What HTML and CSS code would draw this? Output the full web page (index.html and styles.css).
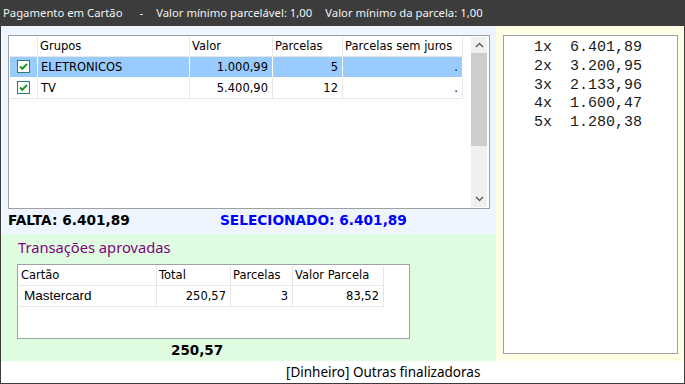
FILE: index.html
```html
<!DOCTYPE html>
<html lang="pt-BR">
<head>
    <meta charset="UTF-8">
    <meta name="viewport" content="width=device-width, initial-scale=1.0">
    <title>Pagamento em Cartão</title>
    <link rel="stylesheet" href="styles.css">
</head>
<body>
    <div class="window">
        <div class="titlebar">
            <span>Pagamento em Cartão</span>
            <span class="title-sep">-</span>
            <span class="title-info">Valor mínimo parcelável: 1,00</span>
            <span class="title-info">Valor mínimo da parcela: 1,00</span>
        </div>

        <div class="main">
            <div class="left-col">
                <div class="grupos-area">
                    <div class="grid grupos-grid">
                        <div class="grid-body">
                            <div class="row head">
                                <div class="cell"></div>
                                <div class="cell">Grupos</div>
                                <div class="cell">Valor</div>
                                <div class="cell">Parcelas</div>
                                <div class="cell">Parcelas sem juros</div>
                            </div>
                            <div class="row selected">
                                <div class="cell check-cell">
                                    <svg class="check" width="13" height="13" viewBox="0 0 13 13">
                                        <rect x="0.5" y="0.5" width="12" height="12" fill="#fff" stroke="#22806f"/>
                                        <polyline points="3,6.5 5.3,8.8 10,4" fill="none" stroke="#1c9a1c" stroke-width="2"/>
                                    </svg>
                                </div>
                                <div class="cell">ELETRONICOS</div>
                                <div class="cell num">1.000,99</div>
                                <div class="cell num">5</div>
                                <div class="cell num">.</div>
                            </div>
                            <div class="row">
                                <div class="cell check-cell">
                                    <svg class="check" width="13" height="13" viewBox="0 0 13 13">
                                        <rect x="0.5" y="0.5" width="12" height="12" fill="#fff" stroke="#22806f"/>
                                        <polyline points="3,6.5 5.3,8.8 10,4" fill="none" stroke="#1c9a1c" stroke-width="2"/>
                                    </svg>
                                </div>
                                <div class="cell">TV</div>
                                <div class="cell num">5.400,90</div>
                                <div class="cell num">12</div>
                                <div class="cell num">.</div>
                            </div>
                        </div>
                        <div class="scrollbar">
                            <div class="scroll-btn">
                                <svg width="9" height="6" viewBox="0 0 9 6"><polyline points="1,5 4.5,1.5 8,5" fill="none" stroke="#606060" stroke-width="1.5"/></svg>
                            </div>
                            <div class="scroll-thumb"></div>
                            <div class="scroll-track"></div>
                            <div class="scroll-btn">
                                <svg width="9" height="6" viewBox="0 0 9 6"><polyline points="1,1 4.5,4.5 8,1" fill="none" stroke="#606060" stroke-width="1.5"/></svg>
                            </div>
                        </div>
                    </div>
                    <div class="totals">
                        <span class="falta">FALTA: 6.401,89</span>
                        <span class="selecionado">SELECIONADO: 6.401,89</span>
                    </div>
                </div>

                <div class="transacoes">
                    <div class="section-title">Transações aprovadas</div>
                    <div class="grid trans-grid">
                        <div class="row head">
                            <div class="cell">Cartão</div>
                            <div class="cell">Total</div>
                            <div class="cell">Parcelas</div>
                            <div class="cell">Valor Parcela</div>
                        </div>
                        <div class="row">
                            <div class="cell card-name">Mastercard</div>
                            <div class="cell num">250,57</div>
                            <div class="cell num">3</div>
                            <div class="cell num">83,52</div>
                        </div>
                    </div>
                    <div class="trans-total">250,57</div>
                </div>
            </div>

            <div class="parcelas-panel">
                <div class="parcelas-box">
                    <div class="parcela">1x  6.401,89</div>
                    <div class="parcela">2x  3.200,95</div>
                    <div class="parcela">3x  2.133,96</div>
                    <div class="parcela">4x  1.600,47</div>
                    <div class="parcela">5x  1.280,38</div>
                </div>
            </div>
        </div>

        <div class="footer">[Dinheiro] Outras finalizadoras</div>
    </div>
</body>
</html>
```

FILE: styles.css
```css
:root {
    --frame-color: #3c3c3c;
    --grid-border: #a0a0a0;
    --cell-line: #e6e6e6;
    --selected-color: #99ccfd;
    --blue-bg: #eef5fe;
    --green-bg: #e0fce0;
    --yellow-bg: #ffffe6;
}

* {
    box-sizing: border-box;
}

body {
    margin: 0;
    padding: 0;
    background-color: #fff;
}

.window {
    width: 685px;
    height: 384px;
    border: 1px solid var(--frame-color);
    border-top: none;
    display: flex;
    flex-direction: column;
    overflow: hidden;
}

.titlebar {
    height: 26px;
    line-height: 26px;
    background-color: var(--frame-color);
    color: #f2f2f2;
    font-family: "Noto Sans", sans-serif;
    font-size: 11.3px;
    display: flex;
    white-space: nowrap;
    margin: 0 -1px;
    padding-left: 3px;
}

.title-sep {
    margin-left: 17px;
}

.title-info {
    margin-left: 13px;
}

.main {
    display: flex;
    height: 335px;
}

.left-col {
    width: 495px;
    flex-shrink: 0;
    display: flex;
    flex-direction: column;
}

.grupos-area {
    height: 209px;
    background-color: var(--blue-bg);
    padding: 9px 0 0 7px;
}

.grid {
    background-color: #fff;
    border: 1px solid var(--grid-border);
    padding: 1px;
    font-family: "DejaVu Sans", sans-serif;
    font-size: 11.5px;
    color: #000;
}

.grupos-grid {
    width: 482px;
    height: 174px;
    display: flex;
}

.grid-body {
    flex: 1;
}

.row {
    display: grid;
    height: 21px;
}

.row.head {
    height: 20px;
}

.grupos-grid .row {
    grid-template-columns: 28px 152px 83px 70px 120px;
}

.cell {
    border-right: 1px solid var(--cell-line);
    border-bottom: 1px solid var(--cell-line);
    line-height: 20px;
    padding: 0 3px;
    white-space: nowrap;
    overflow: hidden;
}

.head .cell {
    line-height: 19px;
    padding-left: 2px;
}

.cell.num {
    text-align: right;
    padding-right: 4px;
}

.row.selected .cell {
    background-color: var(--selected-color);
    border-color: #fff;
}

.check-cell {
    padding: 3px 0 0 7px;
}

.check {
    display: block;
}

.scrollbar {
    width: 16px;
    margin-right: 1px;
    background-color: #f0f0f0;
    display: flex;
    flex-direction: column;
}

.scroll-btn {
    height: 16px;
    display: flex;
    align-items: center;
    justify-content: center;
}

.scroll-thumb {
    height: 93px;
    background-color: #cdcdcd;
}

.scroll-track {
    flex: 1;
}

.totals {
    display: flex;
    padding-top: 2px;
    font-family: "DejaVu Sans", sans-serif;
    font-weight: bold;
    font-size: 13.7px;
    line-height: 18px;
    white-space: nowrap;
}

.falta {
    width: 212px;
    color: #000;
}

.selecionado {
    color: #0000ff;
}

.transacoes {
    flex: 1;
    background-color: var(--green-bg);
    padding: 3px 0 0 16px;
}

.section-title {
    font-family: "Noto Sans", sans-serif;
    font-size: 14.7px;
    line-height: 20px;
    color: #800080;
    padding-left: 1px;
}

.trans-grid {
    width: 393px;
    height: 75px;
    margin-top: 7px;
}

.trans-grid .row {
    grid-template-columns: 138px 74px 62px 91px;
}

.card-name {
    font-family: "Liberation Sans", sans-serif;
    font-size: 13.5px;
    padding-left: 5px;
}

.trans-total {
    padding-left: 154px;
    font-family: "DejaVu Sans", sans-serif;
    font-weight: bold;
    font-size: 13.5px;
    line-height: 22px;
}

.parcelas-panel {
    flex: 1;
    min-width: 0;
    background-color: var(--yellow-bg);
    padding: 9px 6px 7px 7px;
}

.parcelas-box {
    height: 100%;
    background-color: #fff;
    border: 1px solid var(--grid-border);
    padding: 3px 0 0 30px;
    font-family: "Liberation Mono", monospace;
    font-size: 15px;
    line-height: 18.75px;
    color: #1a1a1a;
}

.parcela {
    white-space: pre;
}

.footer {
    flex: 1;
    background-color: #fff;
    font-family: "Noto Sans", sans-serif;
    font-size: 13.5px;
    line-height: 22px;
    padding-left: 285px;
    color: #000;
    white-space: nowrap;
}
```
